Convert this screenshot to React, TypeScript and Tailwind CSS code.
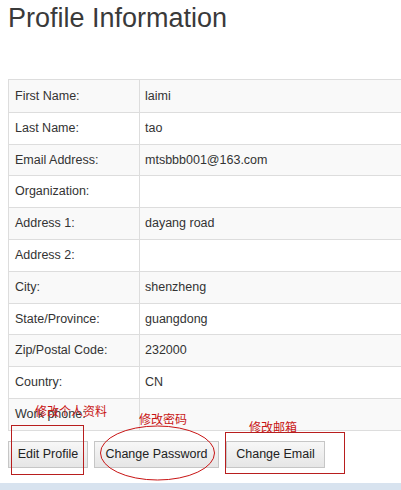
import React from 'react';

const rows = [
  { label: 'First Name:', value: 'laimi' },
  { label: 'Last Name:', value: 'tao' },
  { label: 'Email Address:', value: 'mtsbbb001@163.com' },
  { label: 'Organization:', value: '' },
  { label: 'Address 1:', value: 'dayang road' },
  { label: 'Address 2:', value: '' },
  { label: 'City:', value: 'shenzheng' },
  { label: 'State/Province:', value: 'guangdong' },
  { label: 'Zip/Postal Code:', value: '232000' },
  { label: 'Country:', value: 'CN' },
  { label: 'Work phone:', value: '' },
];

const cjk = "font-['Noto_Sans_CJK_SC',sans-serif]";

const App: React.FC = () => {
  return (
    <div className="relative w-[401px] h-[490px] overflow-hidden bg-white font-['Liberation_Sans',Arial,sans-serif] text-[#333]">
      <div className="pl-[8px]">
        <h1 className="text-[27px] leading-[36px] font-normal text-[#3a3a3a]">Profile Information</h1>

        {/* profile table */}
        <div className="mt-[43px] border-t border-l border-b border-[#ddd] text-[12.5px]">
          {rows.map((row, i) => (
            <div
              key={row.label}
              className={`flex h-[31.8px] ${i > 0 ? 'border-t border-[#ddd]' : ''} ${i % 2 === 0 ? 'bg-[#f9f9f9]' : 'bg-white'}`}
            >
              <div className="w-[131px] shrink-0 flex items-center pl-[6px] border-r border-[#ddd]">{row.label}</div>
              <div className="flex-1 flex items-center pl-[5px]">{row.value}</div>
            </div>
          ))}
        </div>

        <div className="mt-[10px] flex gap-[6px] text-[12.5px] text-[#222]">
          <button className="h-[27px] w-[80px] border border-[#c6c6c6] bg-gradient-to-b from-[#f7f7f7] to-[#e6e6e6]">Edit Profile</button>
          <button className="h-[27px] w-[125px] border border-[#c6c6c6] bg-gradient-to-b from-[#f7f7f7] to-[#e6e6e6]">Change Password</button>
          <button className="ml-[1px] h-[27px] w-[99px] border border-[#c6c6c6] bg-gradient-to-b from-[#f7f7f7] to-[#e6e6e6]">Change Email</button>
        </div>
      </div>

      <div className="mt-[15px] h-[10px] bg-[#d8e3ef]" />

      {/* red annotations drawn over the page */}
      <div className={`absolute left-[35px] top-[405px] text-[12px] leading-[12px] text-[#c81414] ${cjk}`}>修改个人资料</div>
      <div className={`absolute left-[139px] top-[413px] text-[12px] leading-[12px] text-[#c81414] ${cjk}`}>修改密码</div>
      <div className={`absolute left-[249px] top-[421px] text-[12px] leading-[12px] text-[#c81414] ${cjk}`}>修改邮箱</div>
      <div className="absolute left-[11px] top-[425px] w-[73px] h-[50px] border border-[#b81e1e]" />
      <div className="absolute left-[225px] top-[432px] w-[120px] h-[42px] border border-[#b81e1e]" />
      <svg className="absolute left-[99px] top-[423px]" width="118" height="58" viewBox="0 0 118 58">
        <ellipse cx="58.5" cy="30" rx="57" ry="27" fill="none" stroke="#c81414" strokeWidth="1" />
      </svg>
    </div>
  );
};

export default App;
